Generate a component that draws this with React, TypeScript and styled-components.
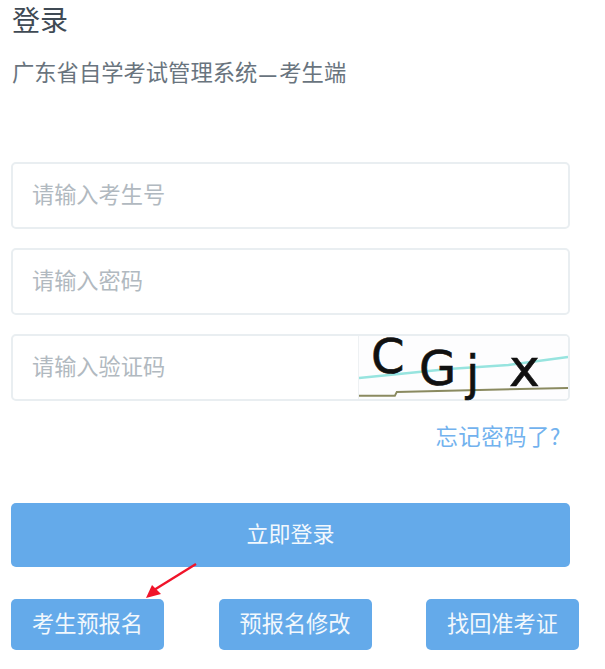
import styled, { createGlobalStyle } from 'styled-components';

const GlobalStyle = createGlobalStyle`
    html, body {
        margin: 0;
        padding: 0;
        background: #fff;
    }
    * {
        box-sizing: border-box;
    }
`;

const Page = styled.div`
    width: 605px;
    height: 669px;
    padding: 0 26px 0 11px;
    overflow: hidden;
    position: relative;
    font-family: 'Noto Sans CJK SC', 'Liberation Sans', sans-serif;
`;

const Title = styled.h1`
    margin: 0;
    height: 42px;
    padding-left: 1px;
    font-size: 28px;
    line-height: 38px;
    font-weight: 400;
    color: #3f4a54;
`;

const Subtitle = styled.p`
    margin: 14px 0 0;
    height: 32px;
    padding-left: 1px;
    font-size: 22.3px;
    line-height: 30px;
    white-space: nowrap;
    color: #69747e;
`;

const Dash = styled.span`
    margin: 0 3px 0 2px;
    font-family: 'Liberation Sans', sans-serif;
    font-size: 17px;
    font-weight: 700;
`;

const Form = styled.div`
    margin-top: 74px;
    display: flex;
    flex-direction: column;
    gap: 20px;
    width: 559px;
`;

const Field = styled.div`
    height: 67px;
    margin-bottom: -1px;
    display: flex;
    align-items: stretch;
    border: 2px solid #e9eef1;
    border-radius: 5px;
    background: #fff;
`;

const Placeholder = styled.span`
    flex: 1;
    padding-left: 19px;
    font-size: 22.2px;
    line-height: 58px;
    color: #b1b9c0;
`;

const Captcha = styled.div`
    width: 210px;
    position: relative;
    border-radius: 0 3px 3px 0;
    background: #fdfdfe;
    border-left: 1px solid #eef1f3;
`;

const CaptchaLines = styled.svg`
    position: absolute;
    inset: 0;
    width: 100%;
    height: 100%;
`;

const CaptchaChar = styled.span<{ $left: number; $top: number; $size: number }>`
    position: absolute;
    left: ${(props) => props.$left}px;
    top: ${(props) => props.$top}px;
    font-family: 'DejaVu Sans', sans-serif;
    font-size: ${(props) => props.$size}px;
    line-height: 1;
    color: #111;
    -webkit-text-stroke: 0.6px #111;
`;

const Forgot = styled.div`
    margin-top: 15px;
    width: 559px;
    padding-right: 9px;
    text-align: right;
    font-size: 22.4px;
    letter-spacing: 0.5px;
    line-height: 40px;
    color: #72b2ee;
`;

const LoginButton = styled.div`
    margin-top: 48px;
    width: 559px;
    height: 64px;
    border-radius: 5px;
    background: #64aaea;
    color: #f2f8fd;
    font-size: 22px;
    line-height: 59px;
    text-align: center;
`;

const Actions = styled.div`
    margin-top: 32px;
    width: 568px;
    display: flex;
    justify-content: space-between;
`;

const ActionButton = styled.div`
    width: 153px;
    height: 51px;
    border-radius: 5px;
    background: #64aaea;
    color: #f2f8fd;
    font-size: 22.2px;
    line-height: 46px;
    text-align: center;
`;

const Arrow = styled.svg`
    position: absolute;
    left: 140px;
    top: 558px;
    width: 60px;
    height: 42px;
`;

function App() {
    return (
        <Page>
            <GlobalStyle />
            <Title>登录</Title>
            <Subtitle>
                广东省自学考试管理系统<Dash>—</Dash>考生端
            </Subtitle>
            <Form>
                <Field>
                    <Placeholder>请输入考生号</Placeholder>
                </Field>
                <Field>
                    <Placeholder>请输入密码</Placeholder>
                </Field>
                <Field>
                    <Placeholder>请输入验证码</Placeholder>
                    <Captcha>
                        <CaptchaLines viewBox="0 0 210 63">
                            <path d="M0 42 L40 38 L90 33 L150 29 L210 21" stroke="#97e4df" strokeWidth="2.5" fill="none" />
                            <path d="M0 60 L36 60 L38 56 L210 52" stroke="#8a8a60" strokeWidth="2" fill="none" />
                        </CaptchaLines>
                        <CaptchaChar $left={12} $top={-4} $size={48}>C</CaptchaChar>
                        <CaptchaChar $left={60} $top={8} $size={48}>G</CaptchaChar>
                        <CaptchaChar $left={107} $top={13} $size={48}>j</CaptchaChar>
                        <CaptchaChar $left={150} $top={6} $size={52}>x</CaptchaChar>
                    </Captcha>
                </Field>
            </Form>
            <Forgot>忘记密码了?</Forgot>
            <LoginButton>立即登录</LoginButton>
            <Actions>
                <ActionButton>考生预报名</ActionButton>
                <ActionButton>预报名修改</ActionButton>
                <ActionButton>找回准考证</ActionButton>
            </Actions>
            <Arrow viewBox="0 0 60 42">
                <path d="M56 6 L14 32" stroke="#f0142a" strokeWidth="2.4" fill="none" />
                <path d="M6 40 L12 27 L21 36 Z" fill="#f0142a" />
            </Arrow>
        </Page>
    );
}

export default App;
